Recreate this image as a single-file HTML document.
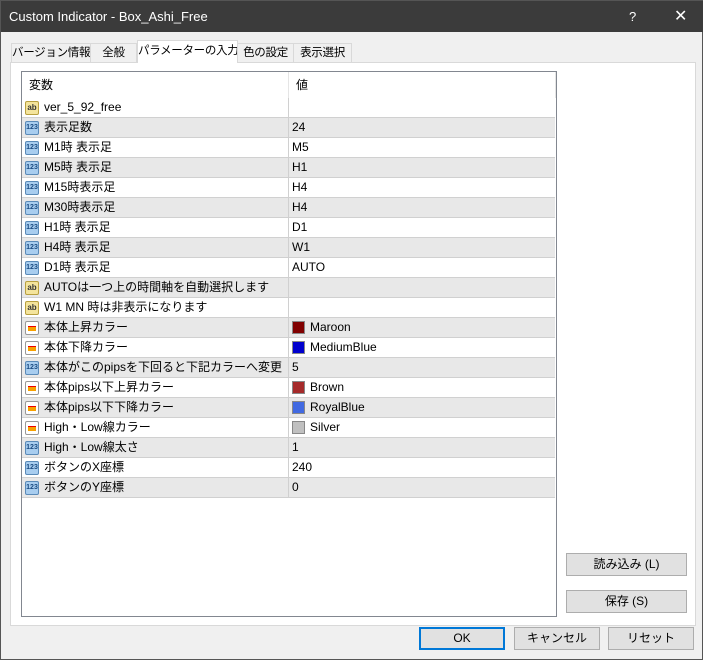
<!DOCTYPE html>
<html><head><meta charset="utf-8"><style>
*{box-sizing:border-box;margin:0;padding:0}
body{width:703px;height:660px;background:#f0f0f0;font-family:"Liberation Sans","Noto Sans CJK JP",sans-serif;font-size:12px;color:#000;position:relative;overflow:hidden;border:1px solid #555;white-space:nowrap}
.title{position:absolute;left:0;top:0;width:703px;height:31px;background:#3b3b3b;color:#fff;font-size:13px;line-height:31px;padding-left:8px}
.title .q{position:absolute;left:628px;top:0}
.title .x{position:absolute;left:673px;top:0;font-size:16px}
.tab{position:absolute;top:42px;height:20px;border:1px solid #d9d9d9;border-bottom:none;background:#f0f0f0;line-height:18px;text-align:center;font-size:11.5px;letter-spacing:-0.3px;overflow:hidden}
.tab.sel{top:39px;height:23px;background:#fff;border-color:#d9d9d9;line-height:21px;z-index:2}
.panel{position:absolute;left:9px;top:61px;width:686px;height:564px;background:#fff;border:1px solid #d9d9d9}
.list{position:absolute;left:20px;top:70px;width:536px;height:546px;border:1px solid #828790;background:#fff}
.hdr{position:absolute;left:0;top:0;width:534px;height:26px;line-height:26px}
.hdr span{position:absolute}
.vline{position:absolute;left:266px;top:0;width:1px;height:26px;background:#e5e5e5}
.row{position:absolute;left:0;width:533px;height:20px;border-bottom:1px solid #d0d0d0;line-height:19px}
.row.g{background:#e8e8e8}
.row .n{position:absolute;left:22px}
.row .v{position:absolute;left:270px}
.row .c{position:absolute;left:266px;top:0;width:1px;height:19px;background:#d0d0d0}
.ic{position:absolute;left:3px;top:3px;width:14px;height:14px;border-radius:2px;font-size:8px;line-height:12px;text-align:center;font-weight:bold}
.ab{background:#f4e49c;border:1px solid #b8a040;color:#333}
.nm{background:#a8cdef;border:1px solid #5a8ab8;color:#1a4a80;font-size:7px}
.cl{background:#fff;border:1px solid #999}
.cl::after{content:"";position:absolute;left:2px;top:4px;width:8px;height:4px;background:#f7a000;border-top:1px solid #e00}
.sw{position:absolute;left:270px;top:3px;width:13px;height:13px;border:1px solid #888}
.btn{position:absolute;height:23px;background:#e1e1e1;border:1px solid #adadad;text-align:center;line-height:21px}
</style></head><body>
<div class="title">Custom Indicator - Box_Ashi_Free<span class="q">?</span><span class="x">✕</span></div>
<div class="tab" style="left:10px;width:80px">バージョン情報</div>
<div class="tab" style="left:89px;width:47px">全般</div>
<div class="tab sel" style="left:136px;width:101px">パラメーターの入力</div>
<div class="tab" style="left:236px;width:57px">色の設定</div>
<div class="tab" style="left:292px;width:59px">表示選択</div>
<div class="panel"></div>
<div class="list">
<div class="hdr"><span style="left:7px">変数</span><span style="left:274px">値</span><div class="vline"></div><div class="vline" style="left:533px"></div></div>
<div class="row" style="top:26px"><div class="ic ab">ab</div><span class="n">ver_5_92_free</span><div class="c"></div></div>
<div class="row g" style="top:46px"><div class="ic nm">123</div><span class="n">表示足数</span><div class="c"></div><span class="v">24</span></div>
<div class="row" style="top:66px"><div class="ic nm">123</div><span class="n">M1時 表示足</span><div class="c"></div><span class="v">M5</span></div>
<div class="row g" style="top:86px"><div class="ic nm">123</div><span class="n">M5時 表示足</span><div class="c"></div><span class="v">H1</span></div>
<div class="row" style="top:106px"><div class="ic nm">123</div><span class="n">M15時表示足</span><div class="c"></div><span class="v">H4</span></div>
<div class="row g" style="top:126px"><div class="ic nm">123</div><span class="n">M30時表示足</span><div class="c"></div><span class="v">H4</span></div>
<div class="row" style="top:146px"><div class="ic nm">123</div><span class="n">H1時 表示足</span><div class="c"></div><span class="v">D1</span></div>
<div class="row g" style="top:166px"><div class="ic nm">123</div><span class="n">H4時 表示足</span><div class="c"></div><span class="v">W1</span></div>
<div class="row" style="top:186px"><div class="ic nm">123</div><span class="n">D1時 表示足</span><div class="c"></div><span class="v">AUTO</span></div>
<div class="row g" style="top:206px"><div class="ic ab">ab</div><span class="n">AUTOは一つ上の時間軸を自動選択します</span><div class="c"></div></div>
<div class="row" style="top:226px"><div class="ic ab">ab</div><span class="n">W1 MN 時は非表示になります</span><div class="c"></div></div>
<div class="row g" style="top:246px"><div class="ic cl"></div><span class="n">本体上昇カラー</span><div class="c"></div><div class="sw" style="background:#800000"></div><span class="v" style="left:288px">Maroon</span></div>
<div class="row" style="top:266px"><div class="ic cl"></div><span class="n">本体下降カラー</span><div class="c"></div><div class="sw" style="background:#0000cd"></div><span class="v" style="left:288px">MediumBlue</span></div>
<div class="row g" style="top:286px"><div class="ic nm">123</div><span class="n">本体がこのpipsを下回ると下記カラーへ変更</span><div class="c"></div><span class="v">5</span></div>
<div class="row" style="top:306px"><div class="ic cl"></div><span class="n">本体pips以下上昇カラー</span><div class="c"></div><div class="sw" style="background:#a52a2a"></div><span class="v" style="left:288px">Brown</span></div>
<div class="row g" style="top:326px"><div class="ic cl"></div><span class="n">本体pips以下下降カラー</span><div class="c"></div><div class="sw" style="background:#4169e1"></div><span class="v" style="left:288px">RoyalBlue</span></div>
<div class="row" style="top:346px"><div class="ic cl"></div><span class="n">High・Low線カラー</span><div class="c"></div><div class="sw" style="background:#c0c0c0"></div><span class="v" style="left:288px">Silver</span></div>
<div class="row g" style="top:366px"><div class="ic nm">123</div><span class="n">High・Low線太さ</span><div class="c"></div><span class="v">1</span></div>
<div class="row" style="top:386px"><div class="ic nm">123</div><span class="n">ボタンのX座標</span><div class="c"></div><span class="v">240</span></div>
<div class="row g" style="top:406px"><div class="ic nm">123</div><span class="n">ボタンのY座標</span><div class="c"></div><span class="v">0</span></div>
</div>
<div class="btn" style="left:565px;top:552px;width:121px">読み込み (L)</div>
<div class="btn" style="left:565px;top:589px;width:121px">保存 (S)</div>
<div class="btn" style="left:418px;top:626px;width:86px;border:2px solid #0078d7;line-height:19px">OK</div>
<div class="btn" style="left:513px;top:626px;width:86px">キャンセル</div>
<div class="btn" style="left:607px;top:626px;width:86px">リセット</div>
</body></html>
